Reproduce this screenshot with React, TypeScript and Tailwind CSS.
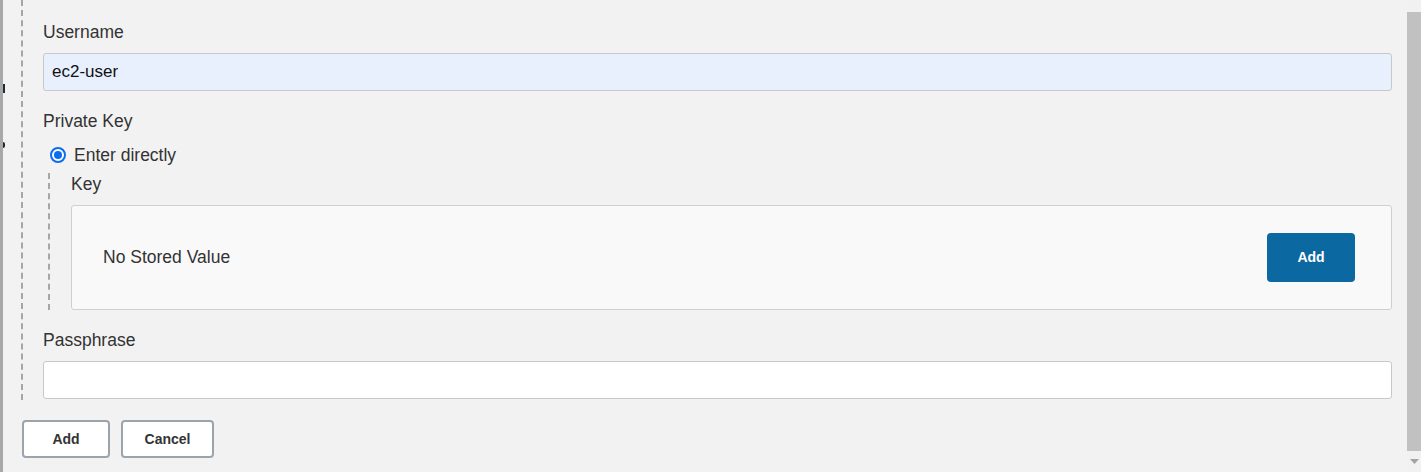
import React from 'react';

const font = { fontFamily: '"Liberation Sans", Arial, sans-serif' };

const Label: React.FC<{ text: string }> = ({ text }) => (
  <div className="h-5 text-[17.5px] leading-5 text-[#333]">{text}</div>
);

export default function App() {
  return (
    <div className="flex h-[472px] w-[1421px] overflow-hidden bg-[#f2f2f2]" style={font}>
      {/* left edge of the page behind the dialog */}
      <div className="relative w-[3px] shrink-0 bg-[#a8a8a8]">
        <span className="absolute left-[3px] top-[84px] h-[9px] w-[2px] bg-[#1f2a36]" />
        <span className="absolute left-[3px] top-[142px] h-[6px] w-[2px] rounded-r-full bg-[#1f2a36]" />
      </div>

      <div className="flex min-w-0 flex-1 flex-col">
        <div className="ml-[18px] mr-[15px] border-l-2 border-dashed border-[#a6a6a6] pb-[1px] pl-[20px] pt-[22px]">
          <Label text="Username" />
          <div className="mt-[11px] flex h-[38px] items-center rounded-[3px] border border-[#c8c8c8] bg-[#e8f0fe] px-[8px] text-[17px] text-[#111]">
            ec2-user
          </div>

          <div className="mt-[20px]">
            <Label text="Private Key" />
          </div>
          <div className="ml-[7px] mt-[14px] flex h-5 items-center gap-[8px]">
            <span className="flex h-[16px] w-[16px] items-center justify-center rounded-full border-2 border-[#0a6cf0] bg-white">
              <span className="h-[8px] w-[8px] rounded-full bg-[#0a6cf0]" />
            </span>
            <span className="text-[17.5px] leading-5 text-[#333]">Enter directly</span>
          </div>

          <div className="ml-[5px] mt-[8px] border-l-2 border-dashed border-[#a6a6a6] pl-[21px] pt-[1px]">
            <Label text="Key" />
            <div className="mt-[11px] flex h-[105px] items-center justify-between rounded-[3px] border border-[#cfcfcf] bg-[#f9f9f9] pl-[31px] pr-[36px]">
              <span className="text-[17.5px] text-[#333]">No Stored Value</span>
              <button className="h-[49px] w-[88px] rounded-[4px] bg-[#0b68a0] text-[14px] font-bold text-white">
                Add
              </button>
            </div>
          </div>

          <div className="mt-[20px]">
            <Label text="Passphrase" />
          </div>
          <div className="mt-[11px] h-[38px] rounded-[3px] border border-[#c8c8c8] bg-white" />
        </div>

        <div className="ml-[19px] mt-[20px] flex gap-[11px]">
          <button className="h-[38px] w-[88px] rounded-[4px] border-2 border-[#9aa4ad] bg-white text-[14px] font-bold text-[#333]">
            Add
          </button>
          <button className="h-[38px] w-[93px] rounded-[4px] border-2 border-[#9aa4ad] bg-white text-[14px] font-bold text-[#333]">
            Cancel
          </button>
        </div>
      </div>

      {/* scrollbar */}
      <div className="flex w-[14px] shrink-0 flex-col bg-[#f1f1f1]">
        <div className="h-[12px]" />
        <div className="h-[439px] bg-[#c1c1c1]" />
        <div className="flex flex-1 items-center justify-center">
          <svg width="9" height="5" viewBox="0 0 9 5">
            <path d="M0 0H9L4.5 5Z" fill="#a3a3a3" />
          </svg>
        </div>
      </div>
    </div>
  );
}
